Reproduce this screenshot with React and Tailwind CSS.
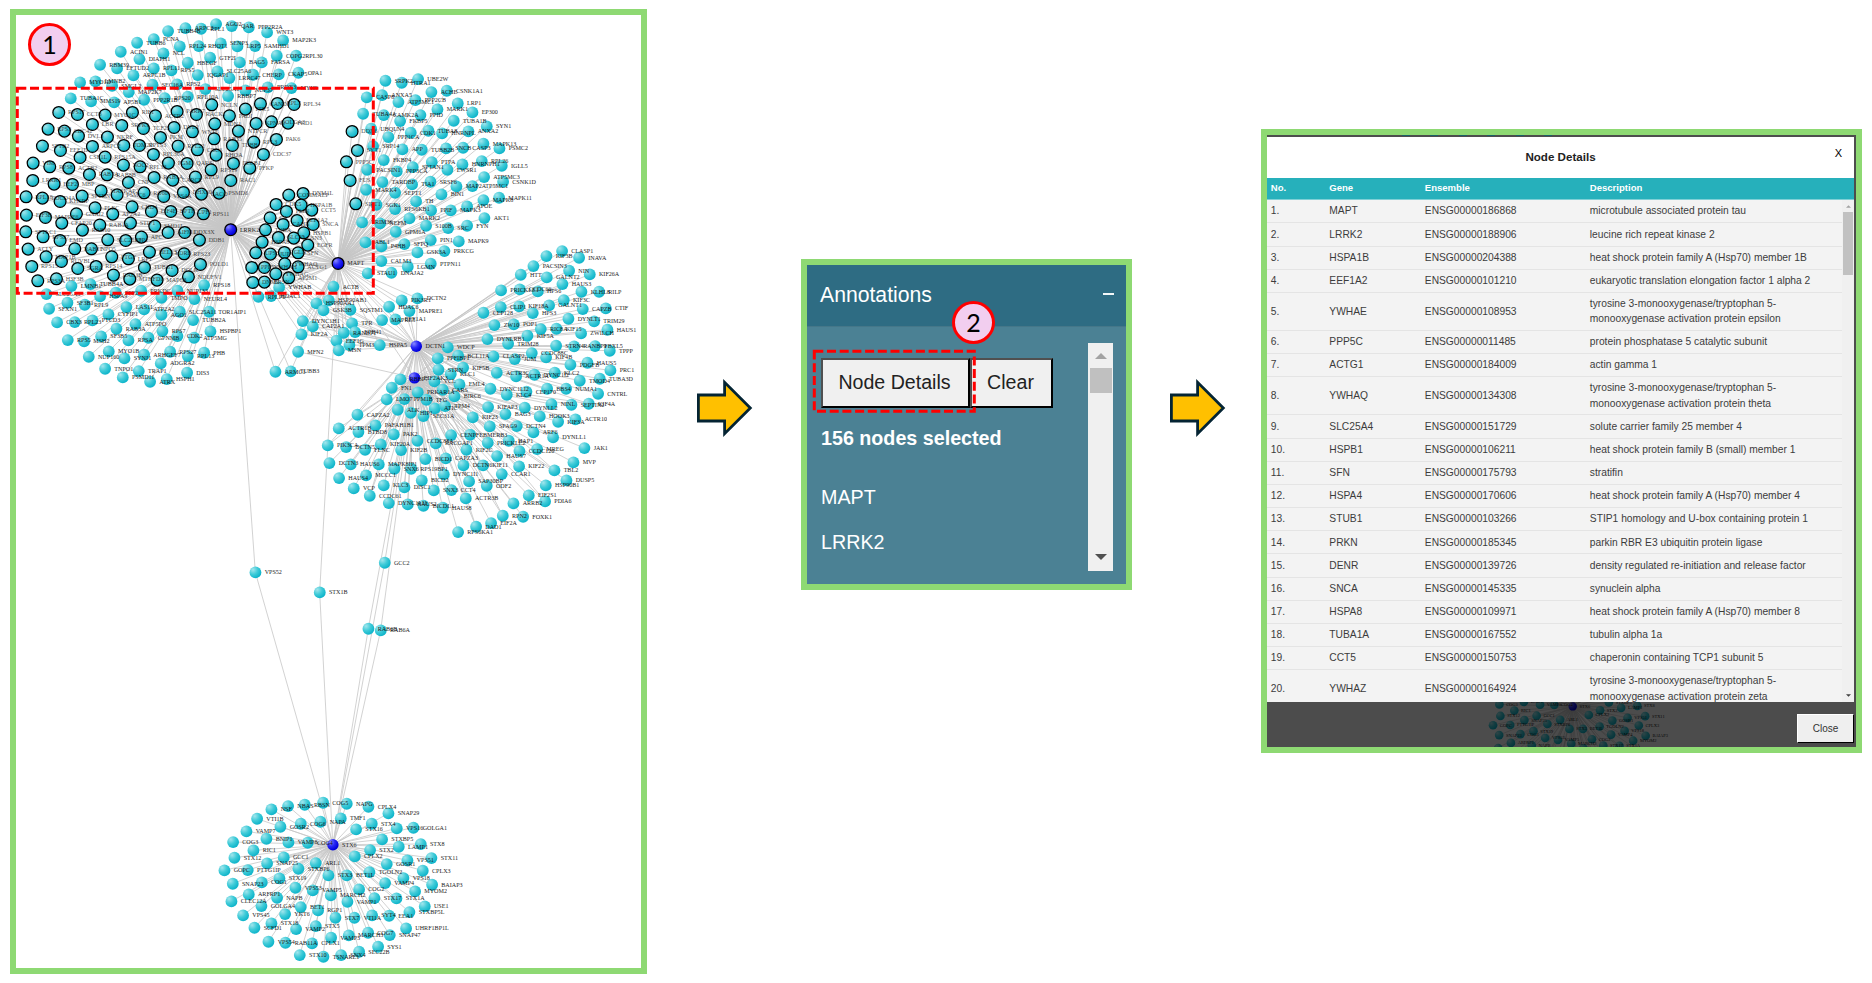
import React from "react";

/* Each block lists "x y LABEL" entries in thirds of a pixel, relative to its origin. */
const parse = (ox, oy, src, extra = {}) =>
  src
    .trim()
    .split(/\s*;\s*/)
    .filter(Boolean)
    .map((entry) => {
      const [x, y, label = ""] = entry.trim().split(/\s+/);
      return { x: ox + Number(x) / 3, y: oy + Number(y) / 3, label, ...extra };
    });

const LRRK2 = { x: 230.6, y: 229.6, label: "LRRK2", hub: true, selected: true };
const MAPT = { x: 338, y: 263.3, label: "MAPT", hub: true, selected: true };
const DCTN1 = { x: 416.2, y: 346.2, label: "DCTN1", hub: true };
const EIF2AK3 = { x: 414.4, y: 377.8, label: "EIF2AK3", hub: true };
const STX6 = { x: 332.8, y: 844.7, label: "STX6", hub: true };

const lrrkTop = parse(8, 8, `
480 69 TUBB4B;532 60 ARPC2;579 62 RPL1;624 48 AGO2;671 54 QAR;722 58 PPP2R2A;777 73 WNT3;825 97 MAP2K3;
387 104 TUBB6;437 93 PCNA;515 115 RPL24;572 114 RHOT1;638 106 SENP3;688 115 LRP5;741 114 SAMHD1;806 143 COPG2;
864 143 RPL30;338 131 ACIN1;394 153 DIAPH1;466 136 NCL;539 164 HBEGF;606 149 GTF2I;695 163 BAG5;761 163 FARSA;
276 170 RBM39;327 181 EFTUD2;437 181 RPL11;490 187 RPS5;376 202 ARPC1B;569 201 IQGAP1;628 190 SLC25A6;664 210 LRRC47;
735 200 CHERP;812 199 CKAP5;871 194 OPA1;216 223 MYO1D;262 220 LMNB2;312 233 SMGL2;433 230 SEC16A;507 229 RPS2;
592 243 SLC25A1;779 238 PRDX3;850 240 MYH9;712 247 NUP37;188 271 TUBA1C;249 280 MMS19;318 283 AP5B1;362 252 MAP2K7;
408 275 PPP2R1B;470 270 RPS20;539 266 RPL10A;660 264 RBBP7`);

const lrrkSelA = parse(8, 8, `
152 313 RPS17;208 319 CCT8;291 321 MYO1C;373 313 RIF1;442 323 ACTR2;507 310 PARK7;565 319 RACK1;611 290 NCLN;
712 303 TTR5;757 287 CAND2;808 286 RPL7;858 289 RPL34;664 323 PADI;120 363 RPS3;169 369 CDC42;253 349 LBR;
341 352 SRPK1;406 361 TCF25;498 358 DVL2;620 347 MDN1;744 346 KPNA2;790 341 GOLGA3;840 345 FKD1;211 384 DVL3;
298 387 NKRF;457 388 PKM;553 371 WNT5;691 369 NTPCR;103 414 SPTB2;157 427 EEF1D;253 415 ARPC2;347 412 TOM20;
394 412 RPTS3;510 414 RPL22;568 425 CDC6;618 392 RAB35;673 412 TUBB;737 402 RPL3;805 394 PAK6`, { selected: true });

const lrrkSelB = parse(8, 150, `
216 22 CSE1L;291 21 RPS15A;436 13 RPL36A;481 39 PGM1;537 40 QARS;624 15 RHOA;676 40 PLCB1;766 13 CDC37;
75 39 VIM;125 50 RPS8;182 54 ACTB2;346 45 NOC2;396 50 RPL13;609 59 RPS19;725 54 PFKP;74 91 LRRK1;138 102 EEF2;
193 103 MBP;244 73 RAB7A;297 74 RAB8B;361 97 CNP;438 82 RAB1A;494 90 CARCE;562 81 RPL9;668 91 RAC1;54 140 RPL18;
103 144 PDCD4A;156 154 KHSRP;222 138 SPTBN1;279 122 MAPKAP2;327 134 PSMC6;408 128 RO60;467 139 VPS4A;526 127 DHX30;
580 132 CACO;633 129 PSMD6;55 195 EIF3B;112 202 MAPRE6;161 219 CFAP20;205 191 GNAI2;261 173 PLEC;314 192 AP2A2;
372 170 CHD4;430 184 EIF4E;488 184 BPTF;541 187 UPF1;586 191 RPS11;53 245 SPTLC1;105 260 RPS27;223 240 RAB10;
275 225 RAB1A;367 219 STIP1;440 228 SMD1L;480 247 AIFM1;530 247 DDX3X;574 270 DDB1;156 271 EMD;299 269 SLC25A3;
353 271 PPP1;400 261 APC;60 297 ACLY;200 296 RAB11;250 296 NPO5;114 320 MAP1B;160 334 RUVBL2;209 355 SGRA;
264 349 RPS14;311 320 PTGF;361 326 LRP1;424 306 HELLS;474 310 LDRB;528 311 RPS23;409 352 TUBG1;492 361 DOLK;
577 343 POLD1;316 375 RAB3B;365 387 MTHFD1;71 349 RPS15;89 392 RPS3A;145 386 H3F3B;447 390 MAP6B;541 380 NDUFV1`, { selected: true });

const shared = parse(8, 150, `
842 135 COMMAEP;885 130 DNM1L;804 163 CDK5;879 165 HSPA1B;911 180 CCT5;835 184 PLIN;786 203 CA;867 211 EEF1A2;
825 223 CAHN;915 223 SNCA;772 239 TUBA;887 248 HSPB1;811 262 SLC25;857 264 LGSN3;762 276 HSPA8;899 285 EGFR;
743 308 UPS3;787 312 JUP;829 307 GLN;870 308 SFN;731 352 PPP5;769 352 YWHAH;830 341 YWHAQ;870 350 ACTG1;
803 371 YWHAG;734 397 DNM2;769 396 BRSN;842 383 AP2M1`, { selected: true });

const lrrkLow = [
  ...parse(8, 150, "247 402 TUBB4A;190 408 LMNB1"),
  ...parse(8, 270, `
115 72 SLC25A5;276 79 HSPA9;323 68 PPP2;399 62 PRKDC;508 62 NUP133;588 45 RPS18;123 116 SFXN1;178 98 SF3B1;
230 104 RPL9;460 83 TMPO;559 87 NEURL4;355 111 LAS1L;408 118 ATP2A2;147 157 CBX3;200 156 RPL23;253 151 PTCD3;
301 133 CYFIP1;460 134 AGO1;515 125 SLC25A11;603 125 TOR1AIP1;555 150 TUBB2A;382 162 ATP5PO;325 176 RAB3A;463 183 RPS7;
179 210 RPS5;228 214 MSH2;279 199 SF3B5;361 211 RPSA;421 203 GPNMB;508 198 CDK2;558 203 ATP5MG;607 184 HSPBP1;
242 260 NUP160;302 244 MYO1B;349 265 SYNJ1;408 254 ARHGEF7;486 245 RPS27;539 258 RPL13;588 248 PHB;458 280 ADGRA2;
291 296 TNPO1;392 303 TRAP1;537 308 DIS3;344 322 PSMD11;426 335 ATRX;476 327 HSPH1`),
];

const sharedLow = [
  ...parse(8, 150, "813 412 YWHAB"),
  ...parse(8, 270, "751 80 RPLP0;789 78 HDAC1;976 50 ACTB"),
];

const between = parse(300, 240, `
49 190 HSP90AA1;86 181 HSP90AB1;70 211 GSK3B;151 209 SQSTM1;8 243 DYNC1H1;38 259 CAP2A1;4 283 KIF2A;156 250 TPR;
131 278 RANBP1;165 276 EPB41;109 302 EEF1G;148 315 TPM3;116 331 MSN;239 315 HSPA5;267 200 HDAC6;305 181 PIK3R1;
352 175 DCTN2;328 213 MAPRE1;246 240 MAPRE3;286 238 EEF1A1`);
const mfn2 = parse(8, 270, "870 245 MFN2");
const tubPair = parse(8, 270, "802 305 ARMC1;848 304 TUBB3");

const maptSel = parse(320, 70, "96 184 DDX6;112 241 SYT1;79 275 PPP5C;90 331 FUS;107 401 SIRT1", { selected: true });
const maptNodes = parse(320, 70, `
196 32 SRPK2;245 38 HTRA1;294 27 UBE2W;334 66 ACHE;380 62 CSNK1A1;140 82 CASP8;186 75 ANXA5;235 96 ATP5MC1;
286 90 PPP2CB;413 100 LRP1;457 127 EP300;352 118 MARK1;129 131 TUBA4A;191 135 CAMK2A;301 135 PPID;240 153 FKBP5;
401 152 TUBA1B;500 169 SYN1;153 176 UBQLN4;205 201 PPP1CA;272 188 CDK1;325 182 TUBA8;366 190 HNRNPL;445 184 ANXA2;
159 228 SRP14;247 238 APP;305 239 TUBB2B;378 235 SNCB;429 233 CASP3;490 221 MAPK13;538 235 PSMC2;191 270 FKBP4;
141 299 PACSIN1;230 304 PPP3CA;278 291 SPTAN1;335 276 PTPA;382 299 EWSR1;427 283 HNRNPH1;485 273 RPL26;545 287 IGLL5;
187 336 TARDBP;276 343 TIA1;331 335 SRSF6;492 321 ATP5MC3;549 335 CSNK1D;409 349 MAP2;457 348 ATP5MC1;138 359 MARK4;
225 368 SEPT1;364 373 BIN1;288 394 TH;537 383 MAPK11;490 390 MAPK8;169 404 SGK1;225 417 RPS6KB1;333 421 PPIF;
392 421 MAPK3;441 409 APOE;126 457 TRIM36;180 460 NEFM;268 445 MARK2;493 444 AKT1;318 467 S100B;384 474 SRC;
441 467 FYN;227 485 GPM6A;136 517 ABL1;184 529 P4HB;253 522 SFPQ;332 510 PIN1;416 514 MAPK9;292 547 GSK3A;
373 543 PRKCG;184 573 CALM3;263 590 LGMN;332 581 PTPN11;143 610 STAU1;214 608 DNAJA2`);

const dctnNodes = parse(300, 240, `
786 33 CLASP1;739 48 KIF3B;837 53 INAVA;700 78 PACSIN3;662 104 HTT;740 112 GALNT2;807 92 NIN;869 103 KIF26A;
787 132 HAUS3;603 151 PRICKLE1;659 148 CCDC66;713 154 HPS6;844 155 KLHL8;897 155 RILP;791 180 KIF3C;602 201 CLIP1;
657 199 KIF18A;747 196 GALNT1;550 218 CEP128;698 219 HPS3;848 207 CAPZB;917 205 CTIF;805 236 DYNLT1;882 244 TRIM29;
583 255 ZW10;641 253 POP1;722 267 RIC8A;769 266 KIF15;843 280 ZWILCH;922 269 HAUS1;562 297 DYNLRB1;682 287 KIF5A;
624 311 TRIM28;768 317 STRN4;822 319 RANBP9;885 318 FBXL5;929 332 TPPP;580 349 CLASP2;644 357 JUM;695 339 CCDC88C;
738 352 KIF4B;811 374 PDGFB;862 368 HAUS5;931 391 PRC1;590 398 ACTR3C;648 409 ACTR1A;703 404 DYNC1I2;764 398 KLC2;
839 422 TMOD4;899 416 TUBA3D;571 446 DYNC1LI2;620 464 KLC4;679 455 CEP170;741 446 BBS4;798 446 NUMA1;894 461 CNTRL;
443 322 WDCP;413 355 PPFIBP1;474 347 BCL11A;415 389 STRN;489 383 KIF5B;452 402 KLC1;403 424 VCL;478 433 EML4;
301 418 RBBP7;275 443 FN1;260 478 LMO7;353 457 PRKAR1A;428 449 CARS;313 477 PPM1B;379 479 TFG;463 469 BIRC6`);

const lowerNodes = parse(300, 390, `
293 59 ALK;332 68 HIP1;370 78 SEC31A;404 55 ATIC;435 48 TPM4;564 51 KIFAP3;674 53 DYNLL2;754 42 NINL;814 44 SEPTIN2;
866 41 KIF4A;518 82 KIF23;616 72 BAG3;719 79 HOOK3;774 95 KIF3A;826 88 ACTR10;569 109 SPAG9;650 108 DCTN4;
700 127 ARF6;172 74 CAPZA2;116 115 ACTR1B;175 126 BTBD8;226 106 PAFAH1B1;281 133 PAK2;453 135 CENPF;510 134 EBMERB3;
626 152 HAP1;759 142 DYNLL1;83 166 PIK3CA;138 171 DCTN5;195 179 FLNC;242 163 KIF20A;352 152 CCDC88A;407 160 RACGAP1;
563 158 PRICKLE2;303 180 KIF2B;499 179 KIF2C;658 183 CCDC120;711 177 MREG;853 174 JAK1;591 198 HAUS7;88 219 DCTN3;
152 223 HAUS6;236 223 MAPK8IP1;283 236 SNX6;333 236 RPS19BP1;376 207 BICD1;437 205 CAPZA3;490 226 DCTN6;549 226 KIF11;
657 229 KIF22;820 217 MVP;763 241 TBL2;117 264 HAUS4;198 256 MCCC1;431 253 DYNC1I1;605 252 CCAR1;365 271 BICD2;
507 274 SAP30BP;799 271 DUSP5;737 286 HSP90B1;560 287 ODF2;161 295 VCP;251 286 KLC3;313 292 DISC1;401 301 SNX3;
454 300 CCT4;209 317 CCDC61;497 325 ACTR3B;686 316 EIF2S1;735 334 PDIA6;640 340 ARRB2;266 339 DYNC1LI1;323 343 HAUS2;
370 347 BICDL1;428 353 HAUS8;608 377 RPN2;669 380 FOXK1;573 399 EIF2A;528 410 DAD1;474 426 RPS6KA1`);

const stxNodes = parse(210, 785, `
184 73 NSF;234 63 NBAS;284 59 RBSN;339 53 COG5;410 56 NAPG;475 65 CPLX4;535 85 SNAP29;141 101 VTI1B;211 125 GOSR2;
272 116 COG6;331 110 NAPA;392 100 TMF1;485 116 STX4;438 133 STX16;560 130 VPS16;610 128 GOLGA1;109 139 VAMP7;
69 171 COG3;169 161 BNIP1;235 172 VAMP8;293 173 COG4;516 163 STXBP5;566 185 LAMP1;632 177 STX8;130 196 RIC1;
480 195 STX2;434 214 CPLX2;73 218 STX12;221 217 GCC1;592 226 VPS51;664 219 STX11;530 237 GOSR1;171 235 SNAP25;
317 234 ARL1;43 256 GOPC;113 255 PTTG1IP;265 251 STXBP6;638 257 CPLX3;478 261 TGOLN2;355 271 STX3;410 271 BET1L;
580 279 VPS18;208 280 STX19;525 294 VAMP4;68 296 SNAP23;155 292 COG1;666 299 BAIAP3;615 319 MYOM2;447 313 COG2;
256 308 VPS53;308 316 VAMP5;362 331 MARCH2;116 328 ARFRP1;201 338 NAPB;493 339 STX17;559 340 STX1A;412 350 VAMP1;
64 349 CLEC12A;154 363 GOLGA4;272 366 BET1;644 364 USE1;324 376 RGP1;598 381 STXBP5L;225 387 YKT6;99 391 VPS45;
376 398 STX7;433 398 VTI1A;486 391 SYT4;537 392 EEA1;133 428 SCFD1;184 415 STX18;258 432 VAMP2;317 423 STX5;
588 430 UHRF1BP1L;539 450 SNAP47;474 443 COG7;416 451 MARCH3;363 458 VAMP3;175 470 VPS54;226 473 RAB11A;
306 475 CPLX1;504 485 SYS1;447 500 SEC22B;269 510 STX10;340 515 TSNARE1;393 510 SNX4`);

const [vps52, stx1b, gcc2, rab6b, rab6a] = parse(230, 530, "76 127 VPS52;269 187 STX1B;464 98 GCC2;415 296 RAB6B;452 301 RAB6A");

const link = (hub, nodes) => nodes.map((n) => [hub, n]);
const edges = [
  ...link(LRRK2, [...lrrkTop, ...lrrkSelA, ...lrrkSelB, ...shared, ...lrrkLow, ...sharedLow, ...tubPair, MAPT, vps52]),
  ...link(MAPT, [...shared, ...sharedLow, ...between, ...mfn2, ...tubPair, ...maptSel, ...maptNodes, stx1b, DCTN1, EIF2AK3]),
  ...link(LRRK2, between.slice(0, 13)),
  ...link(DCTN1, [...dctnNodes, ...between, ...lowerNodes.filter((_, i) => i % 3 === 0)]),
  ...link(EIF2AK3, [...lowerNodes, ...dctnNodes.slice(-16), ...mfn2, gcc2, rab6b, rab6a]),
  ...link(STX6, [...stxNodes, vps52, stx1b, gcc2, rab6b, rab6a]),
];
const nodes = [
  ...lrrkTop, ...lrrkLow, ...sharedLow, ...between, ...mfn2, ...tubPair, ...maptNodes, ...dctnNodes, ...lowerNodes,
  ...lrrkSelA, ...lrrkSelB, ...shared, ...maptSel, ...stxNodes, vps52, stx1b, gcc2, rab6a, rab6b,
  LRRK2, MAPT, DCTN1, EIF2AK3, STX6,
];
const stxEdges = link(STX6, stxNodes);
const stxAll = [...stxNodes, STX6];

function Network({ id, viewBox, className, nodes, edges }) {
  return (
    <svg viewBox={viewBox} className={className} preserveAspectRatio="none">
      <defs>
        <radialGradient id={id + "-node"} cx="0.3" cy="0.27" r="0.72">
          <stop offset="0" stopColor="#a2e5ec" />
          <stop offset="0.55" stopColor="#3fcbd8" />
          <stop offset="1" stopColor="#12b6cb" />
        </radialGradient>
        <radialGradient id={id + "-hub"} cx="0.3" cy="0.27" r="0.72">
          <stop offset="0" stopColor="#8a8aff" />
          <stop offset="0.5" stopColor="#2a2af5" />
          <stop offset="1" stopColor="#0000dc" />
        </radialGradient>
      </defs>
      <g stroke="#c6c6c6" strokeWidth="0.8">
        {edges.map(([a, b], i) => (
          <line key={i} x1={a.x} y1={a.y} x2={b.x} y2={b.y} />
        ))}
      </g>
      {nodes.map((n, i) => (
        <circle
          key={i}
          cx={n.x + 0.1}
          cy={n.y + 0.1}
          r={n.hub && !n.selected ? 5.7 : 5.9}
          fill={"url(#" + id + (n.hub ? "-hub)" : "-node)")}
          stroke={n.selected ? "#000" : "none"}
          strokeWidth={n.selected ? 1.25 : 0}
        />
      ))}
      <g fontFamily="'Liberation Serif', serif" fontSize="6.1" fill="#111">
        {nodes.map((n, i) => (
          <text key={i} x={n.x + 9.3} y={n.y + 2.1} opacity={n.selected && !n.hub ? 0.75 : 0.95}>
            {n.label}
          </text>
        ))}
      </g>
    </svg>
  );
}

function Arrow({ className }) {
  return (
    <svg viewBox="0 0 58 60" className={"h-[60px] w-[58px] shrink-0 " + className}>
      <path
        d="M3.4 17H29.6V4.3L55.3 30L29.6 55.7V43H3.4Z"
        fill="#ffc000"
        stroke="#042433"
        strokeWidth="2.8"
      />
    </svg>
  );
}

function Badge({ children, className }) {
  return (
    <div
      className={
        "absolute flex h-[43px] w-[43px] items-center justify-center rounded-full border-[3px] border-[#ff0000] bg-[#f2ceef] font-['Lato',sans-serif] text-[25px] leading-none text-black " +
        className
      }
    >
      {children}
    </div>
  );
}

function GraphPanel() {
  return (
    <section className="relative mt-[9px] ml-[10px] h-[965px] w-[637px] shrink-0 border-6 border-[#8ed973] bg-white">
      <Network id="full" viewBox="16 15 625 953" className="block h-[953px] w-[625px]" nodes={nodes} edges={edges} />
      <svg className="absolute top-[71px] left-[-1px] h-[210px] w-[362px]" viewBox="0 0 362 210">
        <rect x="2.3" y="2.3" width="356" height="205" fill="none" stroke="#ff0000" strokeWidth="3" strokeDasharray="9 3.7" />
      </svg>
      <Badge className="top-[8px] left-[12px]">1</Badge>
    </section>
  );
}

function AnnotationsPanel() {
  return (
    <section className="relative mt-[259px] flex h-[331px] w-[331px] shrink-0 flex-col border-6 border-[#8ed973] bg-[#4b8194] font-['Liberation_Sans',Arial,sans-serif] text-[19.7px] text-white">
      <header className="flex h-[62px] shrink-0 items-center justify-between border-b border-[#457789] bg-[#2e6c83] pr-[12px] pb-[2px] pl-[13px]">
        <h2 className="text-[21.2px] leading-none">Annotations</h2>
        <span className="mb-[2px] h-[2px] w-[11px] bg-[#f3f7f8]" />
      </header>
      <div className="flex grow justify-between pt-4 pr-[13px] pl-[14px]">
        <div className="pt-[15px]">
          <div className="flex text-[19.6px] leading-none text-[#222]">
            <button className="h-[50px] w-[149px] border-2 border-t-[#505050] border-r-black border-b-black border-l-[#505050] bg-[#f0f0f0] pr-[2px]">
              Node Details
            </button>
            <button className="h-[50px] w-[83px] border-2 border-t-[#505050] border-r-black border-b-black border-l-[#505050] bg-[#f0f0f0] pr-[2px]">
              Clear
            </button>
          </div>
          <p className="mt-5 leading-5 font-bold">156 nodes selected</p>
          <p className="mt-[39px] leading-5">MAPT</p>
          <p className="mt-[25px] leading-5">LRRK2</p>
        </div>
        <div className="flex h-[228px] w-[25px] flex-col items-center bg-[#f0f0f0]">
          <svg viewBox="0 0 12 6" className="mt-[10px] h-[6px] w-[12px] fill-[#a3a3a3]">
            <path d="M0 6L6 0L12 6Z" />
          </svg>
          <div className="mt-[9px] h-[25px] w-[22px] bg-[#c0c0c0]" />
          <svg viewBox="0 0 12 6" className="mt-auto mb-[11px] h-[6px] w-[12px] fill-[#505050]">
            <path d="M0 0L6 6L12 0Z" />
          </svg>
        </div>
      </div>
      <svg className="absolute top-[84px] left-[5px] h-[65px] w-[165px]" viewBox="0 0 165 65">
        <rect x="2.3" y="2.3" width="160" height="60" fill="none" stroke="#ff0000" strokeWidth="3" strokeDasharray="9 3.7" />
      </svg>
      <Badge className="top-[36px] left-[145px]">2</Badge>
    </section>
  );
}

const rows = [
  ["MAPT", "ENSG00000186868", "microtubule associated protein tau"],
  ["LRRK2", "ENSG00000188906", "leucine rich repeat kinase 2"],
  ["HSPA1B", "ENSG00000204388", "heat shock protein family A (Hsp70) member 1B"],
  ["EEF1A2", "ENSG00000101210", "eukaryotic translation elongation factor 1 alpha 2"],
  ["YWHAE", "ENSG00000108953", "tyrosine 3-monooxygenase/tryptophan 5-", "monooxygenase activation protein epsilon"],
  ["PPP5C", "ENSG00000011485", "protein phosphatase 5 catalytic subunit"],
  ["ACTG1", "ENSG00000184009", "actin gamma 1"],
  ["YWHAQ", "ENSG00000134308", "tyrosine 3-monooxygenase/tryptophan 5-", "monooxygenase activation protein theta"],
  ["SLC25A4", "ENSG00000151729", "solute carrier family 25 member 4"],
  ["HSPB1", "ENSG00000106211", "heat shock protein family B (small) member 1"],
  ["SFN", "ENSG00000175793", "stratifin"],
  ["HSPA4", "ENSG00000170606", "heat shock protein family A (Hsp70) member 4"],
  ["STUB1", "ENSG00000103266", "STIP1 homology and U-box containing protein 1"],
  ["PRKN", "ENSG00000185345", "parkin RBR E3 ubiquitin protein ligase"],
  ["DENR", "ENSG00000139726", "density regulated re-initiation and release factor"],
  ["SNCA", "ENSG00000145335", "synuclein alpha"],
  ["HSPA8", "ENSG00000109971", "heat shock protein family A (Hsp70) member 8"],
  ["TUBA1A", "ENSG00000167552", "tubulin alpha 1a"],
  ["CCT5", "ENSG00000150753", "chaperonin containing TCP1 subunit 5"],
  ["YWHAZ", "ENSG00000164924", "tyrosine 3-monooxygenase/tryptophan 5-", "monooxygenase activation protein zeta"],
];

function DetailsPanel() {
  return (
    <section className="mt-[129px] flex h-[624px] w-[601px] shrink-0 flex-col border-6 border-[#8ed973] bg-[#4d4d4d] font-['Liberation_Sans',Arial,sans-serif]">
      <div className="h-[2px] shrink-0 pl-[135px]">
        <div className="flex h-[2px] w-[150px] justify-between">
          {[0, 1, 2, 3, 4, 5].map((i) => (
            <span key={i} className="h-px w-[8px] bg-[#1b5f68]" />
          ))}
        </div>
      </div>
      <div className="mr-[2px] flex h-[565px] shrink-0 flex-col bg-[#f3f3f3]">
        <header className="relative flex h-[41px] shrink-0 items-center justify-center bg-white pb-[2px] text-[11.6px] font-bold text-[#222]">
          Node Details
          <span className="absolute top-[10px] right-[12px] text-[11px] leading-3 font-normal text-black">X</span>
        </header>
        <div className="grid h-[22px] shrink-0 grid-cols-[58.5px_95.5px_165px_1fr] items-center border-b border-[#7fd0d6] bg-[#26b0bb] pl-[3.8px] text-[9.55px] font-bold text-white">
          <span>No.</span>
          <span>Gene</span>
          <span>Ensemble</span>
          <span>Description</span>
        </div>
        <div className="flex min-h-0 grow">
          <div className="h-full w-[575px] overflow-hidden pt-[0.2px] text-[10.25px] text-[#3c3c3c]">
            {rows.map(([gene, id, line1, line2], i) => (
              <div
                key={gene}
                className={
                  "grid grid-cols-[58.5px_95.5px_165px_1fr] items-center border-b border-[#e4e4e4] pl-[3.8px] leading-[15.6px] " +
                  (line2 ? "h-[38px]" : "h-[23.2px]")
                }
              >
                <span>{i + 1}.</span>
                <span>{gene}</span>
                <span>{id}</span>
                <span className="whitespace-nowrap">
                  {line1}
                  {line2 && <br />}
                  {line2}
                </span>
              </div>
            ))}
          </div>
          <div className="flex grow flex-col items-center bg-[#f0f0f0]">
            <svg viewBox="0 0 6 3" className="mt-[5px] h-[3px] w-[5px] fill-[#a3a3a3]">
              <path d="M0 3L3 0L6 3Z" />
            </svg>
            <div className="mt-[4px] h-[63px] w-[10px] bg-[#c1c1c1]" />
            <svg viewBox="0 0 6 3" className="mt-auto mb-[5px] h-[3px] w-[5px] fill-[#404040]">
              <path d="M0 0L3 3L6 0Z" />
            </svg>
          </div>
        </div>
      </div>
      <footer className="relative flex h-[45px] shrink-0 items-start justify-end overflow-hidden bg-white pt-[12px] pr-[2px]">
        <Network
          id="dim"
          viewBox="-83.1 838.8 801.4 61.2"
          className="absolute inset-0 h-[45px] w-[589px]"
          nodes={stxAll}
          edges={stxEdges}
        />
        <div className="absolute inset-0 bg-black/70" />
        <button className="relative h-[29px] w-[57px] border border-t-white border-r-black border-b-black border-l-white bg-[#efefef] pb-px text-[10px] text-[#333]">
          Close
        </button>
      </footer>
    </section>
  );
}

export default function App() {
  return (
    <main className="flex h-[983px] w-[1872px] items-start overflow-hidden bg-white">
      <GraphPanel />
      <Arrow className="mt-[378px] ml-[48px]" />
      <div className="ml-[48px] flex">
        <AnnotationsPanel />
      </div>
      <Arrow className="mt-[378px] ml-[36px]" />
      <div className="ml-[35px] flex">
        <DetailsPanel />
      </div>
    </main>
  );
}
